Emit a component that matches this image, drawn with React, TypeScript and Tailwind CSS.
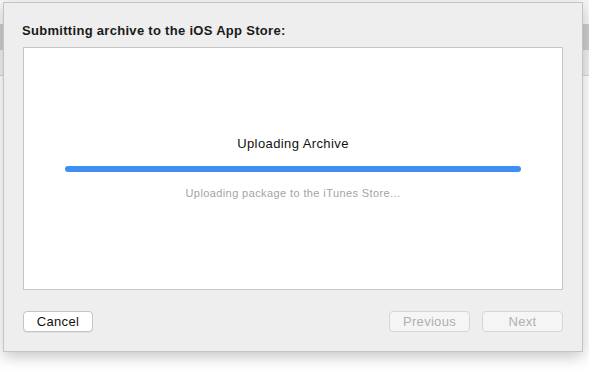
import React from "react";

const font = { fontFamily: '"Liberation Sans", Arial, sans-serif' };

export default function App() {
  return (
    <div className="relative w-[589px] h-[374px] bg-white overflow-hidden" style={font}>
      {/* background window */}
      <div className="flex flex-col">
        <div className="h-[24px] bg-[#f6f6f6]" />
        <div className="h-[26px] bg-[#cdcdcd]" />
        <div className="h-[26px] bg-[#efefef] border-b border-[#d6d6d6]" />
      </div>
      {/* sheet */}
      <div className="absolute left-[3px] top-[2px] w-[580px] h-[350px] bg-[#eeeeee] border border-[#c4c4c4] shadow-[0_5px_14px_rgba(0,0,0,0.22)] flex flex-col pl-[19px] pt-[20px]">
        <div className="-ml-px h-[16px] text-[13px] leading-[16px] font-bold tracking-[0.3px] text-[#1a1a1a]">
          Submitting archive to the iOS App Store:
        </div>
        <div className="mt-[8px] w-[540px] h-[243px] bg-white border border-[#c6c6c6] flex flex-col items-center pt-[88px]">
          <div className="h-[16px] text-[13px] leading-[16px] tracking-[0.4px] text-[#111]">Uploading Archive</div>
          <div className="mt-[14px] w-[456px] h-[6px] rounded-full bg-[#3f8ef2]" />
          <div className="mt-[14px] h-[14px] text-[11px] leading-[14px] tracking-[0.4px] text-[#a3a3a3]">
            Uploading package to the iTunes Store...
          </div>
        </div>
        <div className="mt-[21px] w-[540px] flex items-center">
          <button className="w-[70px] h-[21px] rounded-[4px] bg-white border border-[#c4c4c4] shadow-[0_1px_0_rgba(0,0,0,0.06)] text-[13px] leading-[19px] tracking-[0.3px] text-[#111]">
            Cancel
          </button>
          <div className="flex-1" />
          <button className="w-[81px] h-[21px] rounded-[4px] bg-[#f5f5f5] border border-[#d6d6d6] text-[13px] leading-[19px] tracking-[0.3px] text-[#b0b0b0]">
            Previous
          </button>
          <button className="ml-[12px] w-[81px] h-[21px] rounded-[4px] bg-[#f5f5f5] border border-[#d6d6d6] text-[13px] leading-[19px] tracking-[0.3px] text-[#b0b0b0]">
            Next
          </button>
        </div>
      </div>
    </div>
  );
}
